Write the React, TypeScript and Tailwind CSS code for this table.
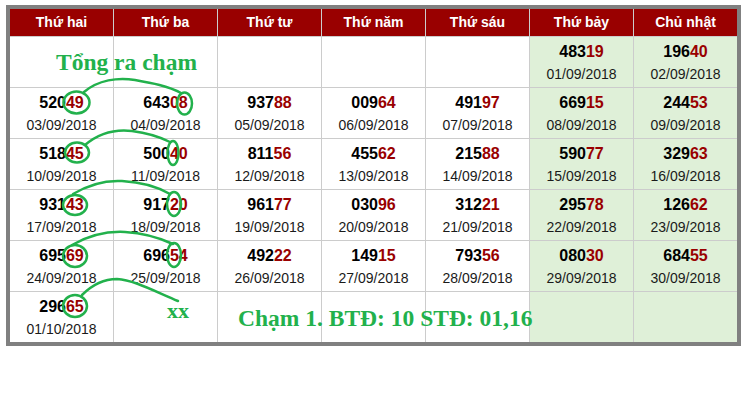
import React from "react";

type Cell = { n: string; d: string } | null;

const headers = ["Thứ hai", "Thứ ba", "Thứ tư", "Thứ năm", "Thứ sáu", "Thứ bảy", "Chủ nhật"];

const rows: Cell[][] = [
  [null, null, null, null, null, { n: "48319", d: "01/09/2018" }, { n: "19640", d: "02/09/2018" }],
  [
    { n: "52049", d: "03/09/2018" },
    { n: "64308", d: "04/09/2018" },
    { n: "93788", d: "05/09/2018" },
    { n: "00964", d: "06/09/2018" },
    { n: "49197", d: "07/09/2018" },
    { n: "66915", d: "08/09/2018" },
    { n: "24453", d: "09/09/2018" },
  ],
  [
    { n: "51845", d: "10/09/2018" },
    { n: "50040", d: "11/09/2018" },
    { n: "81156", d: "12/09/2018" },
    { n: "45562", d: "13/09/2018" },
    { n: "21588", d: "14/09/2018" },
    { n: "59077", d: "15/09/2018" },
    { n: "32963", d: "16/09/2018" },
  ],
  [
    { n: "93143", d: "17/09/2018" },
    { n: "91720", d: "18/09/2018" },
    { n: "96177", d: "19/09/2018" },
    { n: "03096", d: "20/09/2018" },
    { n: "31221", d: "21/09/2018" },
    { n: "29578", d: "22/09/2018" },
    { n: "12662", d: "23/09/2018" },
  ],
  [
    { n: "69569", d: "24/09/2018" },
    { n: "69654", d: "25/09/2018" },
    { n: "49222", d: "26/09/2018" },
    { n: "14915", d: "27/09/2018" },
    { n: "79356", d: "28/09/2018" },
    { n: "08030", d: "29/09/2018" },
    { n: "68455", d: "30/09/2018" },
  ],
  [{ n: "29665", d: "01/10/2018" }, null, null, null, null, null, null],
];

const G = "#22b14c";

export default function App() {
  return (
    <div className="relative w-[743px] h-[398px] bg-white overflow-hidden" style={{ fontFamily: '"Liberation Sans", Arial, sans-serif' }}>
      <div className="pl-[6px] pt-[5px]">
        <div className="w-[735px] border-4 border-[#808080]">
          <div className="grid grid-cols-[repeat(7,103px)] grid-rows-[27px_repeat(6,50px)] gap-px bg-[#cccccc]">
            {headers.map((h) => (
              <div
                key={h}
                className="bg-[#990000] text-white font-bold text-[14px] leading-[26px] flex justify-center"
              >
                {h}
              </div>
            ))}
            {rows.map((r, ri) =>
              r.map((c, ci) => (
                <div
                  key={`${ri}-${ci}`}
                  className={`${ci >= 5 ? "bg-[#dff0d8]" : "bg-white"} pt-[5px] text-center`}
                >
                  {c && (
                    <>
                      <div className="font-bold text-[16px] leading-[20px] text-black">
                        {c.n.slice(0, 3)}
                        <span className="text-[#990000]">{c.n.slice(3)}</span>
                      </div>
                      <div className="text-[14px] leading-[20px] mt-[2px] text-[#1a1a1a]">{c.d}</div>
                    </>
                  )}
                </div>
              ))
            )}
          </div>
        </div>
      </div>

      <svg
        className="absolute left-0 top-0 pointer-events-none"
        width="743"
        height="398"
        viewBox="0 0 743 398"
        fill="none"
        stroke={G}
        strokeWidth="2.5"
        strokeLinecap="round"
      >
        <ellipse cx="76.5" cy="102.5" rx="13" ry="11" />
        <ellipse cx="184.5" cy="103.5" rx="7.5" ry="11" />
        <path d="M84 92 C98 80 118 77 135 80 C152 83 168 86 181 93" />

        <ellipse cx="77" cy="152.5" rx="12" ry="10" />
        <ellipse cx="173" cy="153" rx="5.5" ry="12" />
        <path d="M85 145 C98 134 115 129 132 131 C148 133 160 137 170 142" />

        <ellipse cx="75" cy="205" rx="12" ry="10" />
        <ellipse cx="174" cy="204" rx="7" ry="12" />
        <path d="M73 194 C88 185 104 180 122 181 C140 182 158 187 170 194" />

        <ellipse cx="75" cy="256" rx="12" ry="11" />
        <ellipse cx="174" cy="255" rx="7" ry="12" />
        <path d="M72 245 C88 236 106 231 125 232 C143 233 160 238 173 244" />

        <ellipse cx="75" cy="306" rx="12" ry="11" />
        <path d="M82 295 C92 285 104 279 117 279 C133 280 150 289 178 301" />
      </svg>

      <div
        className="absolute left-[56px] top-[51px] text-[23.5px] leading-[23.5px] font-bold text-[#22b14c] whitespace-nowrap"
        style={{ fontFamily: '"Liberation Serif", "Times New Roman", serif' }}
      >
        Tổng ra chạm
      </div>
      <div
        className="absolute left-[167px] top-[300px] text-[22px] leading-[22px] font-bold text-[#22b14c] whitespace-nowrap"
        style={{ fontFamily: '"Liberation Serif", "Times New Roman", serif' }}
      >
        xx
      </div>
      <div
        className="absolute left-[238px] top-[307px] text-[23.5px] leading-[23.5px] font-bold text-[#22b14c] whitespace-nowrap"
        style={{ fontFamily: '"Liberation Serif", "Times New Roman", serif' }}
      >
        Chạm 1. BTĐ: 10 STĐ: 01,16
      </div>
    </div>
  );
}
